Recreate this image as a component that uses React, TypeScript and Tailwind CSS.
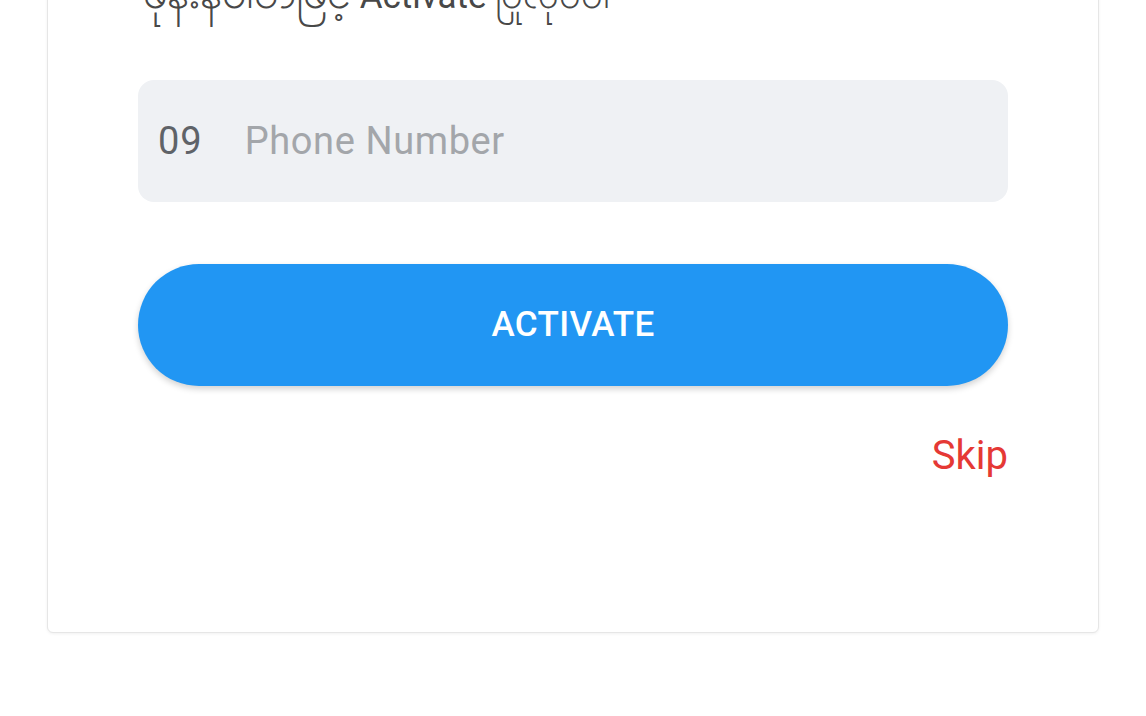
export default function App() {
  return (
    <div className="min-h-screen bg-white overflow-hidden" style={{ fontFamily: "Roboto, 'Noto Sans', 'Liberation Sans', sans-serif" }}>
      <div className="mx-[47px] -mt-[60px] rounded-md border border-[#e6e6e6] bg-white shadow-[0_1px_3px_rgba(0,0,0,0.06)] px-[90px] pt-[28px] pb-[152px]">
        <p className="h-[48px] leading-[48px] pl-[5px] text-[35px] text-[#484848] whitespace-nowrap">
          <span className="text-[43px]">ဖုန်းနံပါတ်ဖြင့်</span> <span className="font-normal">Activate</span>{" "}
          <span className="text-[38px]">ပြုလုပ်ပါ</span>
        </p>

        <div className="mt-[63px] h-[122px] rounded-2xl bg-[#eff1f4] flex items-center pl-[20px] text-[38px]">
          <span className="text-[#5f6368] tracking-[1px]">09</span>
          <span className="ml-[42px] text-[#a3a6aa] tracking-[0.6px]">Phone Number</span>
        </div>

        <button className="mt-[62px] h-[122px] w-full rounded-full bg-[#2196f3] text-white text-[35px] font-medium tracking-[0.4px] shadow-[0_3px_6px_rgba(0,0,0,0.18)]">
          ACTIVATE
        </button>

        <div className="mt-[46px] flex justify-end">
          <span className="h-[48px] leading-[48px] text-[40px] text-[#e53935]">Skip</span>
        </div>
      </div>
    </div>
  );
}
